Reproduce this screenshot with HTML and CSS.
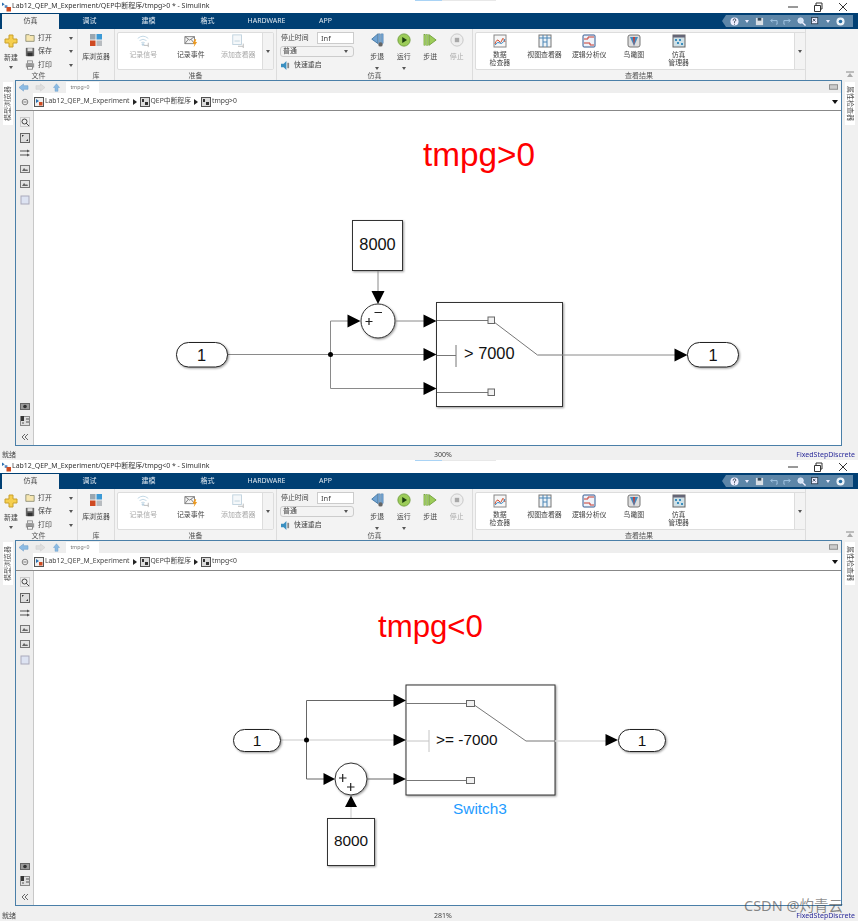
FILE: index.html
```html
<!DOCTYPE html>
<html lang="zh">
<head>
<meta charset="utf-8">
<title>Simulink</title>
<link rel="stylesheet" href="styles.css">
</head>
<body>
<svg class="sprite" aria-hidden="true">
  <symbol id="i-app" viewBox="0 0 10 10"><path d="M0 0l3 2-3 2z" fill="#2a6fb0"/><rect x="3" y="3" width="3" height="3" fill="#5a8ac0"/><rect x="5" y="5" width="5" height="5" fill="#d04a20"/></symbol>
  <symbol id="i-new" viewBox="0 0 16 16"><path d="M6 2h4v4h4v4h-4v4H6v-4H2V6h4z" fill="#f6cf4e" stroke="#c9a02c"/></symbol>
  <symbol id="i-open" viewBox="0 0 12 12"><path d="M1 2h4l1 1h5v7H1z" fill="#f6e6b0" stroke="#8a8a70"/></symbol>
  <symbol id="i-save" viewBox="0 0 12 12"><path d="M1 1h10v10H1z" fill="#666"/><rect x="3" y="1.500" width="6" height="3.500" fill="#ddd"/><rect x="3" y="7" width="6" height="4" fill="#333"/></symbol>
  <symbol id="i-print" viewBox="0 0 12 12"><rect x="3" y="1" width="6" height="3" fill="#eee" stroke="#888"/><rect x="1" y="4" width="10" height="5" fill="#999"/><rect x="3" y="8" width="6" height="3" fill="#fff" stroke="#777"/></symbol>
  <symbol id="i-lib" viewBox="0 0 14 14"><rect x="1" y="1" width="5.500" height="5.500" fill="#9aa7b0"/><rect x="7.500" y="1" width="5.500" height="5.500" fill="#3c9ad6"/><rect x="1" y="7.500" width="5.500" height="5.500" fill="#cf4a22"/><rect x="7.500" y="7.500" width="5.500" height="5.500" fill="#b8bcc0"/></symbol>
  <symbol id="i-sig" viewBox="0 0 16 16"><g fill="none" stroke="#bcd3e2"><path d="M2 5q6-5 12 0M4 7.500q4-3 8 0M6 10q2-1.500 4 0"/></g><circle cx="8" cy="12" r="1.500" fill="#bcd3e2"/><path d="M9 13h5M14 10v5" stroke="#b5b5b5"/></symbol>
  <symbol id="i-evt" viewBox="0 0 16 16"><path d="M1 3h11v8H1z" fill="#f4f4f4" stroke="#777"/><path d="M1 3l5.500 4L12 3M1 11l4-5M12 11L8 6" fill="none" stroke="#777"/><path d="M12 6l-2 5h2l-1 4 4-6h-2l1-3z" fill="#ee9a1f"/></symbol>
  <symbol id="i-add" viewBox="0 0 16 16"><rect x="2" y="1" width="10" height="11" fill="#f5f8fa" stroke="#bcd0dc"/><path d="M4 8h6" stroke="#bcd0dc"/><path d="M8 14h6M14 11v5" stroke="#b5b5b5"/></symbol>
  <symbol id="i-sback" viewBox="0 0 16 16"><path d="M9 1v11L2 7z" fill="#6fa3d4" stroke="#40739f"/><rect x="10" y="1" width="2" height="11" fill="#6fa3d4" stroke="#40739f" stroke-width=".5"/><rect x="13" y="1" width="2" height="11" fill="#6fa3d4" stroke="#40739f" stroke-width=".5"/><circle cx="12" cy="13" r="2.500" fill="#666"/></symbol>
  <symbol id="i-run" viewBox="0 0 16 16"><circle cx="8" cy="8" r="7" fill="#9ccc58" stroke="#6f9e3a"/><path d="M6 4.500l5.500 3.500L6 11.500z" fill="#1d3d10"/></symbol>
  <symbol id="i-sfwd" viewBox="0 0 16 16"><rect x="1" y="2" width="2" height="12" fill="#9ccc58" stroke="#6f9e3a" stroke-width=".5"/><rect x="4" y="2" width="2" height="12" fill="#9ccc58" stroke="#6f9e3a" stroke-width=".5"/><path d="M7 2l8 6-8 6z" fill="#9ccc58" stroke="#6f9e3a"/></symbol>
  <symbol id="i-stop" viewBox="0 0 16 16"><circle cx="8" cy="8" r="7" fill="#eee" stroke="#c4c4c4"/><rect x="5.500" y="5.500" width="5" height="5" fill="#a8a8a8"/></symbol>
  <symbol id="i-fast" viewBox="0 0 10 10"><path d="M0 3h3l3-3v10L3 7H0z" fill="#3a8fc0"/><path d="M7 2h2v6H7z" fill="#888"/></symbol>
  <symbol id="i-sdi" viewBox="0 0 14 14"><rect x="1" y="1" width="12" height="12" fill="#f7f7f7" stroke="#888"/><path d="M2 10q2-6 4-3t3-1 3 2" fill="none" stroke="#d0492a"/><path d="M2 11q3-4 5-2t5-4" fill="none" stroke="#3c8ac4"/></symbol>
  <symbol id="i-view" viewBox="0 0 14 14"><rect x="1" y="1" width="12" height="12" fill="#eef3f7" stroke="#777"/><path d="M1 4h12M5 1v12M9 1v12M5 8h4" stroke="#4a85b5" fill="none"/></symbol>
  <symbol id="i-logic" viewBox="0 0 14 14"><rect x="1" y="1" width="12" height="12" rx="1" fill="#eef3fa" stroke="#33588f"/><path d="M2 5h4V3h6M2 9h6v2h4" fill="none" stroke="#c83a30"/></symbol>
  <symbol id="i-bird" viewBox="0 0 14 14"><rect x="1" y="1" width="12" height="12" rx="2" fill="#ddd" stroke="#777"/><path d="M3 3h8L7 12z" fill="#3f8cc4"/><path d="M6 3h2L7 12z" fill="#d0392b"/></symbol>
  <symbol id="i-mgr" viewBox="0 0 14 14"><rect x="1" y="1" width="12" height="12" fill="#cfe0e6" stroke="#666"/><rect x="1" y="1" width="12" height="2.500" fill="#667"/><path d="M3 5h2v2H3zM7 5h2v2H7zM5 8h2v2H5zM9 9h2v2H9z" fill="#3a8fc0"/></symbol>
  <symbol id="i-back" viewBox="0 0 12 10"><path d="M1 5l5-4v2h5v4H6v2z" fill="#8cbbe4" stroke="#6a9dcb" stroke-width=".6"/></symbol>
  <symbol id="i-fwd" viewBox="0 0 12 10"><path d="M11 5L6 1v2H1v4h5v2z" fill="#dedede" stroke="#ccc" stroke-width=".6"/></symbol>
  <symbol id="i-up" viewBox="0 0 10 12"><path d="M5 1l4 5H7v5H3V6H1z" fill="#8cbbe4" stroke="#6a9dcb" stroke-width=".6"/></symbol>
  <symbol id="i-crumb" viewBox="0 0 10 10"><rect x=".500" y=".500" width="9" height="9" fill="#ddd" stroke="#555"/><path d="M2 2h2v3H2zM5 5h3v3H5z" fill="#333"/></symbol>
  <symbol id="i-root" viewBox="0 0 10 10"><rect x=".500" y=".500" width="9" height="9" fill="#eee" stroke="#555"/><path d="M2 2l3 2-3 2z" fill="#2a6fb0"/><rect x="5" y="5" width="3.500" height="3.500" fill="#d04a20"/></symbol>
  <symbol id="i-eye" viewBox="0 0 10 10"><circle cx="5" cy="5" r="3.500" fill="none" stroke="#666"/><path d="M3 5h4" stroke="#666"/></symbol>
  <symbol id="i-zoom" viewBox="0 0 10 10"><rect x=".500" y=".500" width="9" height="9" fill="none" stroke="#aaa" stroke-dasharray="1 1"/><circle cx="4.500" cy="4.500" r="2.500" fill="none" stroke="#444"/><path d="M6 6l3 3" stroke="#444"/></symbol>
  <symbol id="i-fit" viewBox="0 0 10 10"><rect x=".500" y=".500" width="9" height="9" fill="#ddd" stroke="#666"/><path d="M2 2l2 0-2 2zM8 8l-2 0 2-2z" fill="#333"/></symbol>
  <symbol id="i-arrows" viewBox="0 0 10 10"><path d="M0 3h8M0 7h8" stroke="#555"/><path d="M7 1.500l3 1.500-3 1.500zM7 5.500l3 1.500-3 1.500z" fill="#555"/></symbol>
  <symbol id="i-img" viewBox="0 0 10 10"><rect x=".500" y="1.500" width="9" height="7" fill="#e4e4e4" stroke="#777"/><path d="M2 7l2-3 2 2 1-1 1 2z" fill="#666"/></symbol>
  <symbol id="i-square" viewBox="0 0 10 10"><rect x="1" y="1" width="8" height="8" fill="#dde3f2" stroke="#aab"/></symbol>
  <symbol id="i-cam" viewBox="0 0 10 10"><rect x=".500" y="2.500" width="9" height="6" fill="#999" stroke="#666"/><circle cx="5" cy="5.500" r="1.800" fill="#333"/></symbol>
  <symbol id="i-table" viewBox="0 0 10 10"><rect x=".500" y=".500" width="9" height="9" fill="#ddd" stroke="#888"/><rect x="1" y="0" width="3" height="5" fill="#333"/><path d="M6 3h3M6 6h3M2 7h2" stroke="#555"/></symbol>
  <symbol id="i-chev" viewBox="0 0 10 10"><path d="M5 2L2 5l3 3M8 2L5 5l3 3" fill="none" stroke="#666"/></symbol>
  <symbol id="i-panel" viewBox="0 0 10 6"><rect x=".500" y=".500" width="9" height="5" fill="#ccc" stroke="#888"/></symbol>
  <symbol id="i-collapse" viewBox="0 0 10 8"><path d="M1 1h8" stroke="#888"/><path d="M5 2l3 4H2z" fill="#aaa"/></symbol>
  <symbol id="i-help" viewBox="0 0 10 10"><circle cx="5" cy="5" r="4.500" fill="#eef"/><path d="M3.500 4q0-2 1.500-2t1.500 1.500Q6.500 4.500 5 5v1.500M5 7.500v1" fill="none" stroke="#345"/></symbol>
  <symbol id="i-qsave" viewBox="0 0 10 10"><rect x="1" y="1" width="8" height="8" fill="#d8dee4"/><rect x="3" y="1" width="4" height="3" fill="#33485a"/></symbol>
  <symbol id="i-undo" viewBox="0 0 10 10"><path d="M8 8h1V4H2M4 2L2 4l2 2" fill="none" stroke="#a8cbe8"/></symbol>
  <symbol id="i-redo" viewBox="0 0 10 10"><path d="M2 8H1V4h7M6 2l2 2-2 2" fill="none" stroke="#a8cbe8"/></symbol>
  <symbol id="i-find" viewBox="0 0 10 10"><circle cx="4" cy="4" r="3" fill="#cfe3f4" stroke="#eef"/><path d="M6 6l3.500 3.500" stroke="#eef" stroke-width="1.500"/></symbol>
  <symbol id="i-layout" viewBox="0 0 10 10"><rect x=".500" y=".500" width="7" height="7" fill="#eef" stroke="#345"/><path d="M2 2l3 3M5 2L2 5" stroke="#345"/></symbol>
  <symbol id="i-gear" viewBox="0 0 10 10"><circle cx="5" cy="5" r="4.500" fill="#eaf2f8"/><circle cx="5" cy="5" r="2" fill="#2a6fa5"/></symbol>
  <symbol id="i-min" viewBox="0 0 10 10"><path d="M0 5h10" stroke="#333"/></symbol>
  <symbol id="i-max" viewBox="0 0 10 10"><path d="M1.500 3.500h6v6h-6zM3 3V1h6v6H8" fill="none" stroke="#333"/></symbol>
  <symbol id="i-close" viewBox="0 0 10 10"><path d="M1 1l8 8M9 1l-8 8" stroke="#333"/></symbol>
</svg>

<section class="win win-a">
  <header class="titlebar">
    <svg class="ico-app"><use href="#i-app"/></svg>
    <span class="title">Lab12_QEP_M_Experiment/QEP中断程序/tmpg&gt;0 * - Simulink</span>
    <span class="winbtns"><svg><use href="#i-min"/></svg><svg><use href="#i-max"/></svg><svg><use href="#i-close"/></svg></span>
  </header>
  <i class="progress"></i>
  <nav class="tabs">
    <span class="tab active">仿真</span><span class="tab">调试</span><span class="tab">建模</span><span class="tab">格式</span><span class="tab">HARDWARE</span><span class="tab">APP</span>
    <span class="quick"><svg><use href="#i-help"/></svg><i class="caret light"></i><svg><use href="#i-qsave"/></svg><svg><use href="#i-undo"/></svg><svg><use href="#i-redo"/></svg><svg><use href="#i-find"/></svg><svg><use href="#i-layout"/></svg><i class="caret light"></i><svg><use href="#i-gear"/></svg></span>
  </nav>
  <div class="ribbon">
    <div class="group g-file"><div class="gbody">
      <div class="big top b-new"><svg class="bi"><use href="#i-new"/></svg><span>新建</span><i class="caret"></i></div>
      <div class="stack">
        <div class="srow"><svg><use href="#i-open"/></svg><span>打开</span><i class="caret"></i></div>
        <div class="srow"><svg><use href="#i-save"/></svg><span>保存</span><i class="caret"></i></div>
        <div class="srow"><svg><use href="#i-print"/></svg><span>打印</span><i class="caret"></i></div>
      </div>
    </div><div class="glabel">文件</div></div>
    <div class="group g-lib"><div class="gbody"><div class="big top"><svg class="bi"><use href="#i-lib"/></svg><span>库浏览器</span></div></div><div class="glabel">库</div></div>
    <div class="group g-prep"><div class="gbody">
      <div class="gallery gal-prep">
        <div class="gitems items-prep">
          <div class="big off"><svg class="bi"><use href="#i-sig"/></svg><span>记录信号</span></div>
          <div class="big"><svg class="bi"><use href="#i-evt"/></svg><span>记录事件</span></div>
          <div class="big off"><svg class="bi"><use href="#i-add"/></svg><span>添加查看器</span></div>
        </div>
        <div class="gscroll"><i class="caret"></i></div>
      </div>
    </div><div class="glabel">准备</div></div>
    <div class="group g-sim"><div class="gbody">
      <div class="simform">
        <div class="frow"><span class="flabel">停止时间</span><span class="finput">Inf</span></div>
        <div class="fselect"><span>普通</span><i class="caret"></i></div>
        <div class="fast"><svg><use href="#i-fast"/></svg><span>快速重启</span></div>
      </div>
      <div class="simbtns">
        <div class="big top"><svg class="bi"><use href="#i-sback"/></svg><span>步退</span><i class="caret"></i></div>
        <div class="big top"><svg class="bi"><use href="#i-run"/></svg><span>运行</span><i class="caret"></i></div>
        <div class="big top"><svg class="bi"><use href="#i-sfwd"/></svg><span>步进</span></div>
        <div class="big top off"><svg class="bi"><use href="#i-stop"/></svg><span>停止</span></div>
      </div>
    </div><div class="glabel">仿真</div></div>
    <div class="group g-rev"><div class="gbody">
      <div class="gallery gal-rev">
        <div class="gitems items-rev">
          <div class="big"><svg class="bi"><use href="#i-sdi"/></svg><span>数据<br>检查器</span></div>
          <div class="big"><svg class="bi"><use href="#i-view"/></svg><span>视图查看器</span></div>
          <div class="big"><svg class="bi"><use href="#i-logic"/></svg><span>逻辑分析仪</span></div>
          <div class="big"><svg class="bi"><use href="#i-bird"/></svg><span>鸟瞰图</span></div>
          <div class="big"><svg class="bi"><use href="#i-mgr"/></svg><span>仿真<br>管理器</span></div>
        </div>
        <div class="gscroll"><i class="caret"></i></div>
      </div>
    </div><div class="glabel">查看结果</div></div>
    <div class="g-end"><svg><use href="#i-collapse"/></svg></div>
  </div>
  <div class="workspace">
    <aside class="side side-l"><span class="vtab vtab-l">模型浏览器</span></aside>
    <div class="frame">
      <div class="tabstrip">
        <svg class="nav"><use href="#i-back"/></svg><svg class="nav"><use href="#i-fwd"/></svg><svg class="nav"><use href="#i-up"/></svg>
        <span class="doctab">tmpg&gt;0</span>
        <svg class="panel"><use href="#i-panel"/></svg>
      </div>
      <div class="addr">
        <div class="addr-l"><svg><use href="#i-eye"/></svg></div>
        <div class="crumbs">
          <svg><use href="#i-root"/></svg><span>Lab12_QEP_M_Experiment</span><i class="sep"></i>
          <svg><use href="#i-crumb"/></svg><span>QEP中断程序</span><i class="sep"></i>
          <svg><use href="#i-crumb"/></svg><span>tmpg&gt;0</span>
          <i class="caret dark"></i>
        </div>
      </div>
      <div class="editor">
        <div class="tools">
          <svg><use href="#i-zoom"/></svg><svg><use href="#i-fit"/></svg><svg><use href="#i-arrows"/></svg><svg><use href="#i-img"/></svg><svg><use href="#i-img"/></svg><svg><use href="#i-square"/></svg>
          <svg class="push"><use href="#i-cam"/></svg><svg><use href="#i-table"/></svg><svg><use href="#i-chev"/></svg>
        </div>
        <div class="canvas">
          <svg class="diagram" viewBox="34 111 807 335" width="807" height="335">
            <text class="heading" x="423" y="166">tmpg&gt;0</text>
            <rect class="blk" x="352.500" y="220.500" width="50" height="50"/>
            <rect class="blk" x="436.500" y="302.500" width="126" height="104"/>
            <circle class="blk" cx="378" cy="321" r="17"/>
            <path class="wire" d="M378 271V292M227 354.500H424M330.500 354.500V321H348M330.500 354.500V388.500H424M395 321H424M562 355H675"/>
            <path class="inner" d="M437 320.500H488M437 392.500H488M437 355.500H456M456 345V367M494 322L537.500 355H562"/>
            <rect class="pill" x="176.500" y="342.500" width="51" height="24.500" rx="12"/>
            <rect class="pill" x="687.500" y="342.500" width="51" height="24.500" rx="12"/>
            <rect class="port" x="488" y="317" width="6.500" height="6.500"/>
            <rect class="port" x="488" y="389" width="6.500" height="6.500"/>
            <path class="head" d="M371.500 291H384.500L378 304ZM347.500 314.500L360.500 321L347.500 327.500ZM423.500 314.500L436.500 321L423.500 327.500ZM423.500 348L436.500 354.500L423.500 361ZM423.500 382L436.500 388.500L423.500 395ZM674.500 348.500L687.500 355L674.500 361.500Z"/>
            <path class="sign" d="M365.500 321.500H372.500M369 318V325M374.500 312.500H382"/>
            <circle class="dot" cx="330.500" cy="354.500" r="2.500"/>
            <text class="lbl mid" x="377.500" y="250">8000</text>
            <text class="lbl" x="464" y="359">&gt; 7000</text>
            <text class="lbl mid" x="201.500" y="360.500">1</text>
            <text class="lbl mid" x="713" y="360.500">1</text>
          </svg>
        </div>
      </div>
    </div>
    <aside class="side side-r"><span class="vtab">属性检查器</span></aside>
  </div>
  <footer class="status"><span>就绪</span><span class="zoomval">300%</span><span class="solver">FixedStepDiscrete</span></footer>
</section>

<section class="win win-b">
  <header class="titlebar">
    <svg class="ico-app"><use href="#i-app"/></svg>
    <span class="title">Lab12_QEP_M_Experiment/QEP中断程序/tmpg&lt;0 * - Simulink</span>
    <span class="winbtns"><svg><use href="#i-min"/></svg><svg><use href="#i-max"/></svg><svg><use href="#i-close"/></svg></span>
  </header>
  <i class="progress"></i>
  <nav class="tabs">
    <span class="tab active">仿真</span><span class="tab">调试</span><span class="tab">建模</span><span class="tab">格式</span><span class="tab">HARDWARE</span><span class="tab">APP</span>
    <span class="quick"><svg><use href="#i-help"/></svg><i class="caret light"></i><svg><use href="#i-qsave"/></svg><svg><use href="#i-undo"/></svg><svg><use href="#i-redo"/></svg><svg><use href="#i-find"/></svg><svg><use href="#i-layout"/></svg><i class="caret light"></i><svg><use href="#i-gear"/></svg></span>
  </nav>
  <div class="ribbon">
    <div class="group g-file"><div class="gbody">
      <div class="big top b-new"><svg class="bi"><use href="#i-new"/></svg><span>新建</span><i class="caret"></i></div>
      <div class="stack">
        <div class="srow"><svg><use href="#i-open"/></svg><span>打开</span><i class="caret"></i></div>
        <div class="srow"><svg><use href="#i-save"/></svg><span>保存</span><i class="caret"></i></div>
        <div class="srow"><svg><use href="#i-print"/></svg><span>打印</span><i class="caret"></i></div>
      </div>
    </div><div class="glabel">文件</div></div>
    <div class="group g-lib"><div class="gbody"><div class="big top"><svg class="bi"><use href="#i-lib"/></svg><span>库浏览器</span></div></div><div class="glabel">库</div></div>
    <div class="group g-prep"><div class="gbody">
      <div class="gallery gal-prep">
        <div class="gitems items-prep">
          <div class="big off"><svg class="bi"><use href="#i-sig"/></svg><span>记录信号</span></div>
          <div class="big"><svg class="bi"><use href="#i-evt"/></svg><span>记录事件</span></div>
          <div class="big off"><svg class="bi"><use href="#i-add"/></svg><span>添加查看器</span></div>
        </div>
        <div class="gscroll"><i class="caret"></i></div>
      </div>
    </div><div class="glabel">准备</div></div>
    <div class="group g-sim"><div class="gbody">
      <div class="simform">
        <div class="frow"><span class="flabel">停止时间</span><span class="finput">Inf</span></div>
        <div class="fselect"><span>普通</span><i class="caret"></i></div>
        <div class="fast"><svg><use href="#i-fast"/></svg><span>快速重启</span></div>
      </div>
      <div class="simbtns">
        <div class="big top"><svg class="bi"><use href="#i-sback"/></svg><span>步退</span><i class="caret"></i></div>
        <div class="big top"><svg class="bi"><use href="#i-run"/></svg><span>运行</span><i class="caret"></i></div>
        <div class="big top"><svg class="bi"><use href="#i-sfwd"/></svg><span>步进</span></div>
        <div class="big top off"><svg class="bi"><use href="#i-stop"/></svg><span>停止</span></div>
      </div>
    </div><div class="glabel">仿真</div></div>
    <div class="group g-rev"><div class="gbody">
      <div class="gallery gal-rev">
        <div class="gitems items-rev">
          <div class="big"><svg class="bi"><use href="#i-sdi"/></svg><span>数据<br>检查器</span></div>
          <div class="big"><svg class="bi"><use href="#i-view"/></svg><span>视图查看器</span></div>
          <div class="big"><svg class="bi"><use href="#i-logic"/></svg><span>逻辑分析仪</span></div>
          <div class="big"><svg class="bi"><use href="#i-bird"/></svg><span>鸟瞰图</span></div>
          <div class="big"><svg class="bi"><use href="#i-mgr"/></svg><span>仿真<br>管理器</span></div>
        </div>
        <div class="gscroll"><i class="caret"></i></div>
      </div>
    </div><div class="glabel">查看结果</div></div>
    <div class="g-end"><svg><use href="#i-collapse"/></svg></div>
  </div>
  <div class="workspace">
    <aside class="side side-l"><span class="vtab vtab-l">模型浏览器</span></aside>
    <div class="frame">
      <div class="tabstrip">
        <svg class="nav"><use href="#i-back"/></svg><svg class="nav"><use href="#i-fwd"/></svg><svg class="nav"><use href="#i-up"/></svg>
        <span class="doctab">tmpg&lt;0</span>
        <svg class="panel"><use href="#i-panel"/></svg>
      </div>
      <div class="addr">
        <div class="addr-l"><svg><use href="#i-eye"/></svg></div>
        <div class="crumbs">
          <svg><use href="#i-root"/></svg><span>Lab12_QEP_M_Experiment</span><i class="sep"></i>
          <svg><use href="#i-crumb"/></svg><span>QEP中断程序</span><i class="sep"></i>
          <svg><use href="#i-crumb"/></svg><span>tmpg&lt;0</span>
          <i class="caret dark"></i>
        </div>
      </div>
      <div class="editor">
        <div class="tools">
          <svg><use href="#i-zoom"/></svg><svg><use href="#i-fit"/></svg><svg><use href="#i-arrows"/></svg><svg><use href="#i-img"/></svg><svg><use href="#i-img"/></svg><svg><use href="#i-square"/></svg>
          <svg class="push"><use href="#i-cam"/></svg><svg><use href="#i-table"/></svg><svg><use href="#i-chev"/></svg>
        </div>
        <div class="canvas">
          <svg class="diagram" viewBox="34 572 807 334" width="807" height="334">
            <text class="heading h2" x="378" y="638">tmpg&lt;0</text>
            <rect class="blk" x="406" y="686" width="149" height="110"/>
            <circle class="blk" cx="351" cy="780" r="16"/>
            <rect class="blk" x="327.500" y="819.500" width="47" height="47"/>
            <path class="wire-pale" d="M281 741H394M555 742H606M351 808V819"/>
            <path class="wire-dark" d="M306.500 741V701.500H394M306.500 741V780H324M367 780H394"/>
            <path class="inner" d="M406 704.500H467M406 781.500H467M475 706.500L526 742H555"/>
            <path class="inner-pale" d="M406 742H429M429 731V753"/>
            <rect class="pill" x="233.500" y="730.500" width="47" height="22" rx="11"/>
            <rect class="pill" x="618.500" y="730.500" width="47" height="22" rx="11"/>
            <rect class="port" x="466.500" y="701.500" width="8" height="6"/>
            <rect class="port" x="466.500" y="778.500" width="8" height="6"/>
            <path class="head" d="M393.500 695L406 701.500L393.500 708ZM393.500 735L406 741L393.500 747ZM393.500 774L406 780L393.500 786ZM323.500 774L335 780L323.500 786ZM345 808H357L351 796.500ZM605.500 735L618 741L605.500 747Z"/>
            <path class="sign" d="M339 779H346.500M342.700 775V783M347 788H354.500M350.700 784V792"/>
            <circle class="dot" cx="306.500" cy="741" r="2.500"/>
            <text class="lbl l2 mid" x="351" y="847">8000</text>
            <text class="lbl l2" x="436" y="746">&gt;= -7000</text>
            <text class="lbl l2 mid" x="257" y="746.500">1</text>
            <text class="lbl l2 mid" x="642" y="746.500">1</text>
            <text class="lbl l2 blue" x="453" y="815">Switch3</text>
          </svg>
        </div>
      </div>
    </div>
    <aside class="side side-r"><span class="vtab">属性检查器</span></aside>
  </div>
  <footer class="status"><span>就绪</span><span class="zoomval">281%</span><span class="solver">FixedStepDiscrete</span></footer>
  <span class="watermark">CSDN @灼青云</span>
</section>
</body>
</html>
```

FILE: styles.css
```css
* { box-sizing: border-box; }
html, body { margin: 0; height: 921px; overflow: hidden; background: #f0f0f0; }
body { font: 6.900px/1.2 "Noto Sans", "Noto Sans CJK SC", sans-serif; color: #444; }
svg { display: block; }
i { display: block; font-style: normal; }
.sprite { width: 0; height: 0; position: absolute; }

.win { display: flex; flex-direction: column; position: relative; }
.win-a { height: 460px; }
.win-b { height: 461px; }
.win-b .status { height: 15px; padding-top: 5px; }

.titlebar, .tabs, .ribbon, .tabstrip, .addr, .tools, .side, .status { filter: blur(.35px); }

.titlebar { height: 13px; background: #fff; display: flex; align-items: center; padding-left: 2px; color: #333; }
.ico-app { width: 9px; height: 10px; margin-right: 1px; }
.title { font-size: 6.950px; white-space: nowrap; }
.winbtns { margin-left: auto; display: flex; gap: 15px; padding-right: 10px; }
.winbtns svg { width: 10px; height: 10px; }
.progress { position: absolute; left: 415px; top: 0; width: 81px; height: 1px; background: linear-gradient(90deg, #a9d3f5 33%, #e8e8e8 33%); }

.tabs { height: 16px; background: #003f73; display: flex; padding-left: 2px; color: #dfe8ef; position: relative; }
.tab { width: 59px; text-align: center; line-height: 15px; font-size: 7px; }
.tab.active { width: 57px; margin-right: 1px; background: #f3f3f3; color: #444; margin-top: 1px; line-height: 14px; }
.quick { margin: 2px 5px 2px auto; width: 131px; background: #5d86a8; clip-path: polygon(4px 0, 100% 0, 100% 100%, 4px 100%, 0 50%); display: flex; align-items: center; gap: 5px; padding-left: 7.500px; }
.quick svg { width: 9px; height: 9px; flex: none; }
.caret { width: 0; height: 0; border: 2.500px solid transparent; border-top: 3px solid #555; border-bottom: 0; flex: none; }
.caret.light { border-top-color: #eef; margin: 0 1px; }
.caret.dark { border-top-color: #111; border-width: 4px 3px 0; margin-left: auto; margin-right: 3px; }

.ribbon { height: 51px; background: #f3f3f3; display: flex; }
.group { display: flex; flex-direction: column; border-right: 1px solid #dcdcdc; flex: none; }
.gbody { height: 43px; display: flex; padding-top: 3px; }
.glabel { height: 8px; line-height: 8px; text-align: center; color: #555; font-size: 7px; }
.g-file { width: 78px; }
.g-lib { width: 37px; }
.g-prep { width: 162px; }
.g-sim { width: 196px; }
.g-rev { width: 333px; }
.g-end { flex: 1; display: flex; align-items: flex-end; justify-content: flex-end; padding: 0 3px 1px 0; }
.g-end svg { width: 10px; height: 8px; }

.big { display: flex; flex-direction: column; align-items: center; text-align: center; width: 100%; line-height: 8.500px; gap: 2.500px; }
.big .bi { width: 14px; height: 14px; flex: none; }
.big.top { gap: 6px; }
.big.top .bi { margin-top: 1px; }
.big .caret { margin-top: -1px; }
.big.off { color: #aaa; }
.b-new { width: 22px; flex: none; }
.b-new .bi { width: 16px; height: 16px; margin-top: 0; }
.b-new.top { gap: 4.500px; }
.stack { display: flex; flex-direction: column; gap: 3.500px; margin-left: 3px; padding-top: 1px; }
.srow { display: flex; align-items: center; height: 10px; width: 50px; }
.srow svg { width: 10px; height: 10px; margin-right: 3px; flex: none; }
.srow .caret { margin-left: auto; margin-right: 2px; }

.gallery { display: flex; margin: 0 0 0 2px; height: 38px; background: #fff; border: 1px solid #ddd; border-radius: 2px; flex: none; }
.gal-prep { width: 157px; }
.gal-rev { width: 331px; }
.gitems { flex: 1; display: grid; align-items: start; padding-top: 1px; }
.items-prep { grid-template-columns: repeat(3, 47.500px); padding-left: 1.500px; }
.items-rev { grid-template-columns: repeat(5, 44.700px); padding-left: 1.500px; }
.gscroll { width: 11px; background: #f3f3f3; border-left: 1px solid #ddd; display: flex; align-items: center; justify-content: center; }

.simform { width: 78px; margin-left: 3px; display: flex; flex-direction: column; flex: none; }
.frow { display: flex; align-items: center; justify-content: space-between; width: 74px; height: 12px; padding-left: 1px; }
.finput { width: 37px; height: 12px; background: #fff; border: 1px solid #ccc; padding-left: 3px; line-height: 10px; font-size: 7.500px; }
.fselect { height: 11px; margin-top: 2px; border: 1px solid #ccc; border-radius: 3px; display: flex; align-items: center; justify-content: space-between; padding: 0 5px 0 2px; width: 74px; }
.fast { display: flex; align-items: center; gap: 4px; margin-top: 4px; padding-left: 1px; }
.fast svg { width: 9px; height: 9px; }
.simbtns { display: grid; grid-template-columns: repeat(4, 26.500px); margin-left: 6px; align-items: start; }

.workspace { flex: 1; display: flex; min-height: 0; }
.side { width: 15px; flex: none; padding-top: 2px; display: flex; justify-content: center; align-items: flex-start; }
.side-r { width: 16px; }
.vtab { writing-mode: vertical-rl; text-orientation: sideways; background: #fff; width: 10px; height: 43px; text-align: center; line-height: 10px; font-size: 7px; color: #555; }
.vtab-l { transform: rotate(180deg); }

.frame { width: 827px; flex: none; display: flex; flex-direction: column; border: 1px solid #4a7fa8; }
.tabstrip { height: 12px; background: #eee; display: flex; align-items: center; padding-left: 2px; flex: none; }
.nav { width: 11px; height: 9px; margin: 0 2.500px 0 0; flex: none; }
.nav + .nav { margin-left: 3px; }
.doctab { background: #fff; height: 11px; line-height: 11px; padding: 0 5px; margin-left: 1px; font-size: 5.200px; color: #777; margin-top: 1px; width: 33px; text-align: left; white-space: nowrap; }
.panel { margin-left: auto; margin-right: 3px; width: 9px; height: 6px; }

.addr { height: 18px; display: flex; flex: none; border-bottom: 1px solid #888; }
.addr-l { width: 17px; background: #eee; display: flex; align-items: center; justify-content: center; flex: none; }
.addr-l svg { width: 8px; height: 8px; }
.crumbs { flex: 1; display: flex; align-items: center; background: #fff; padding-left: 1px; font-size: 6.800px; color: #444; }
.crumbs svg { width: 10px; height: 10px; margin-right: 1px; flex: none; }
.sep { width: 0; height: 0; border: 3px solid transparent; border-left: 4px solid #222; border-right: 0; margin: 0 3px 0 3px; }

.editor { flex: 1; display: flex; min-height: 0; }
.tools { width: 17px; flex: none; background: #eee; display: flex; flex-direction: column; align-items: center; gap: 5.600px; padding: 6px 0 3px; }
.tools svg { width: 10px; height: 10px; flex: none; }
.tools .push { margin-top: auto; }
.canvas { flex: 1; background: #fff; border-left: 1px solid #c8c8c8; overflow: hidden; }

.heading { font: 33.300px "Liberation Sans", sans-serif; fill: #f00; }
.heading.h2 { font-size: 31.200px; }
.lbl { font: 16.400px "Liberation Sans", sans-serif; fill: #111; }
.lbl.l2 { font-size: 15.400px; }
.lbl.mid { text-anchor: middle; }
.lbl.blue { fill: #1e9bff; }
.wire { fill: none; stroke: #8a8a8a; }
.wire-pale { fill: none; stroke: #dcdcdc; stroke-width: 1.500; }
.wire-dark { fill: none; stroke: #666; }
.inner { fill: none; stroke: #777; }
.inner-pale { fill: none; stroke: #c4c4c4; }
.blk { fill: #fff; stroke: #333; filter: drop-shadow(1px 1px 1px rgba(0, 0, 0, .4)); }
.pill { fill: #fff; stroke: #222; filter: drop-shadow(1px 1px 1px rgba(0, 0, 0, .4)); }
.port { fill: #f2f2f2; stroke: #666; }
.head { fill: #000; }
.sign { fill: none; stroke: #222; stroke-width: 1.200; }
.dot { fill: #000; }

.status { height: 14px; flex: none; background: #f0f0f0; display: grid; grid-template-columns: 427px 28px 1fr; align-items: center; padding: 4px 3px 0 2px; color: #444; font-size: 7px; line-height: 8px; }
.zoomval { text-align: center; }
.solver { text-align: right; color: #2a2a9a; font-size: 7px; }

.watermark { position: absolute; left: 744px; bottom: 9.500px; font: 14.500px/13px "Noto Sans", "Noto Sans CJK SC", sans-serif; color: rgba(60, 60, 60, .6); white-space: nowrap; }
```
